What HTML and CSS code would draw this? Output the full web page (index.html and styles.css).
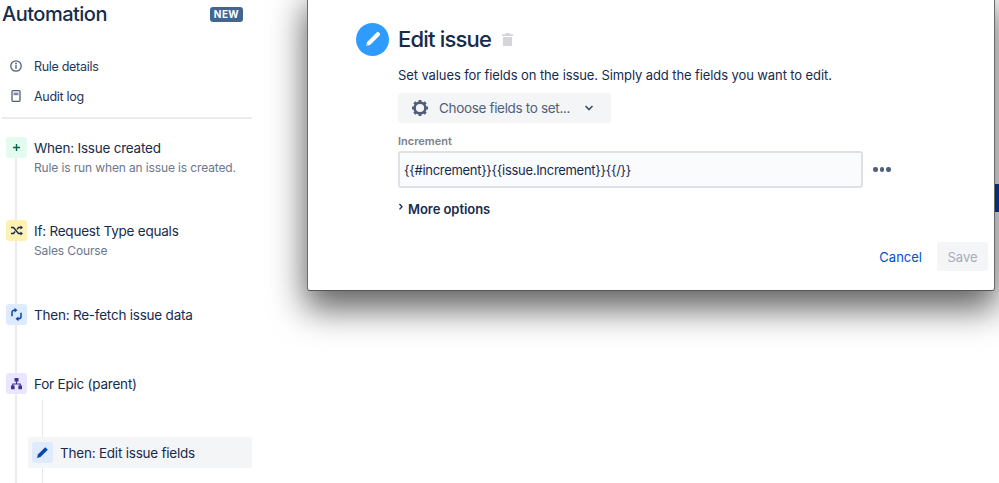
FILE: index.html
```html
<!DOCTYPE html>
<html lang="en">
<head>
<meta charset="utf-8">
<title>Automation</title>
<link rel="stylesheet" href="styles.css">
</head>
<body>
<div class="page">
  <aside class="sidebar">
    <header class="side-head">
      <h1 class="side-title">Automation</h1>
      <span class="badge">NEW</span>
    </header>
    <nav class="side-nav">
      <a class="nav-item">
        <svg class="nav-icon" viewBox="0 0 16 16"><circle cx="8" cy="8" r="5.2" fill="none" stroke="#505f79" stroke-width="1.3"/><rect x="7.3" y="7.2" width="1.4" height="3.6" fill="#505f79"/><circle cx="8" cy="5.5" r=".9" fill="#505f79"/></svg>
        <span>Rule details</span>
      </a>
      <a class="nav-item">
        <svg class="nav-icon" viewBox="0 0 16 16"><rect x="4" y="2.700" width="8" height="10.600" rx="1" fill="none" stroke="#505f79" stroke-width="1.300"/><rect x="5.600" y="4.600" width="4.800" height="2.600" fill="#7a869a"/></svg>
        <span>Audit log</span>
      </a>
    </nav>
    <div class="timeline">
      <div class="step step-when">
        <span class="tile tile-green"><svg viewBox="0 0 21 21"><path d="M10.500 7v7M7 10.500h7" stroke="#006644" stroke-width="1.400"/></svg></span>
        <div class="step-text"><div class="step-name">When: Issue created</div><div class="step-sub">Rule is run when an issue is created.</div></div>
      </div>
      <div class="step step-if">
        <span class="tile tile-yellow"><svg viewBox="0 0 21 21"><path d="M5 7.500h2.500l5 6H15M5 13.500h2.500l1.600-2M11 9.400l1.500-1.900H15" fill="none" stroke="#172b4d" stroke-width="1.400"/><path d="M14.500 5.500l2.500 2-2.500 2zM14.500 11.500l2.500 2-2.500 2z" fill="#172b4d"/></svg></span>
        <div class="step-text"><div class="step-name">If: Request Type equals</div><div class="step-sub">Sales Course</div></div>
      </div>
      <div class="step step-then">
        <span class="tile tile-blue"><svg viewBox="0 0 21 21"><path d="M9.500 6.200H8.200a2.200 2.200 0 0 0-2.200 2.200v3.800M11.500 14.800h1.300a2.200 2.200 0 0 0 2.200-2.200V8.800" fill="none" stroke="#0747a6" stroke-width="1.500"/><path d="M8.500 3.800v4.800l3-2.400zM12.500 17.200v-4.800l-3 2.400z" fill="#0747a6"/></svg></span>
        <div class="step-text"><div class="step-name">Then: Re-fetch issue data</div></div>
      </div>
      <div class="step step-for">
        <span class="tile tile-purple"><svg viewBox="0 0 21 21"><path d="M8.500 5h4v3.600h-4zM5 12.600h3.600v3.600H5zM12.400 12.600H16v3.600h-3.600z" fill="#403294"/><path d="M10.500 8v3H6.800v2M10.500 11h3.700v2" fill="none" stroke="#403294" stroke-width="1.200"/></svg></span>
        <div class="step-text"><div class="step-name">For Epic (parent)</div></div>
      </div>
      <div class="nested">
        <div class="step-active">
          <span class="tile tile-blue"><svg viewBox="0 0 21 21"><path d="M13.200 5.200l2.600 2.600-7.300 7.300-3.400.8.800-3.400z" fill="#0747a6"/></svg></span>
          <div class="step-text"><div class="step-name">Then: Edit issue fields</div></div>
        </div>
      </div>
    </div>
  </aside>
  <div class="stripe"></div>
  <section class="modal">
    <div class="modal-head">
      <span class="modal-icon"><svg viewBox="0 0 33 33"><path d="M20.600 9.400a1.600 1.600 0 0 1 2.300 0l.7.700a1.600 1.600 0 0 1 0 2.300l-9.600 9.600-4 1.100 1.100-4z" fill="#fff"/><circle cx="11.200" cy="21.900" r="1" fill="#8cc8ff"/></svg></span>
      <h2 class="modal-title">Edit issue</h2>
      <svg class="trash" viewBox="0 0 12 14"><path d="M4 0h4l.6 1.400H12v1.800H0V1.400h3.400zM1 4.200h10V13a1 1 0 0 1-1 1H2a1 1 0 0 1-1-1z" fill="#d3d5d9"/></svg>
    </div>
    <div class="modal-body">
      <p class="desc">Set values for fields on the issue. Simply add the fields you want to edit.</p>
      <button class="choose" type="button">
        <svg class="gear" viewBox="0 0 18 18"><circle cx="9" cy="9" r="5.400" fill="none" stroke="#505f79" stroke-width="2.600"/><path d="M9 1v3M9 14v3M1 9h3M14 9h3M3.300 3.300l2.200 2.200M12.500 12.500l2.200 2.200M14.700 3.300l-2.200 2.200M5.500 12.500l-2.200 2.200" stroke="#505f79" stroke-width="2.800"/></svg>
        <span>Choose fields to set...</span>
        <svg class="chev" viewBox="0 0 10 6"><path d="M1.500 1l3.500 3.500L8.500 1" fill="none" stroke="#42526e" stroke-width="1.700"/></svg>
      </button>
      <label class="field-label">Increment</label>
      <div class="field-row">
        <div class="input">{{#increment}}{{issue.Increment}}{{/}}</div>
        <div class="dots"><i></i><i></i><i></i></div>
      </div>
      <div class="more">
        <svg class="more-chev" viewBox="0 0 6 8"><path d="M1.500 1l2.500 2.700L1.500 6.400" fill="none" stroke="#172b4d" stroke-width="1.300"/></svg>
        <span>More options</span>
      </div>
    </div>
    <footer class="modal-foot">
      <a class="cancel">Cancel</a>
      <button class="save" type="button">Save</button>
    </footer>
  </section>
</div>
</body>
</html>
```
FILE: styles.css
```css
* { box-sizing: border-box; }
html, body { margin: 0; height: 100%; }
body {
  background: #fff;
  color: #172b4d;
  font-family: Inter, "Noto Sans", "Liberation Sans", sans-serif;
  overflow: hidden;
}
.page { position: relative; width: 999px; height: 483px; overflow: hidden; }

.sidebar { width: 250px; margin-left: 2px; }
.side-head { display: flex; align-items: center; justify-content: space-between; height: 29px; padding-right: 9px; }
.side-title { margin: 0; font-size: 20px; font-weight: 500; line-height: 29px; color: #172b4d; letter-spacing: -.5px; }
.badge {
  background: #42668f; color: #fff; font-size: 10px; font-weight: 700; letter-spacing: .4px;
  line-height: 14px; height: 15px; width: 33px; text-align: center; border-radius: 3px;
}
.side-nav { margin-top: 22px; padding-bottom: 6px; border-bottom: 2px solid #ebecf0; }
.nav-item { display: flex; align-items: center; height: 30px; font-size: 12.500px; letter-spacing: -.3px; color: #253858; }
.nav-icon { width: 16px; height: 16px; margin: 0 10px 0 6px; flex: none; }

.timeline { position: relative; margin: 18px 0 0 4px; }
.timeline::before {
  content: ""; position: absolute; left: 9px; top: 21px; bottom: -40px; width: 2px; background: #ebecf0;
}
.step { display: flex; gap: 7px; position: relative; }
.step-when { margin-top: 0; }
.step-if { margin-top: 44px; }
.step-then { margin-top: 45px; }
.step-for { margin-top: 47px; }
.tile { width: 21px; height: 21px; border-radius: 3px; flex: none; position: relative; }
.tile svg { display: block; width: 21px; height: 21px; }
.tile-green { background: #e3fcef; }
.tile-yellow { background: #fff0b3; }
.tile-blue { background: #deebff; }
.tile-purple { background: #eae6ff; }
.step-text { padding-top: 1px; }
.step-name { font-size: 13.500px; line-height: 21px; letter-spacing: -.22px; color: #172b4d; white-space: nowrap; }
.step-sub { font-size: 12px; line-height: 16px; letter-spacing: -.13px; margin-top: 1px; color: #6b778c; white-space: nowrap; }

.nested { position: relative; margin: 0 0 0 22px; padding-top: 42px; }
.nested::before {
  content: ""; position: absolute; left: 14px; top: 5px; height: 90px; width: 1px; background: #e6e7eb;
}
.step-active {
  position: relative; display: flex; align-items: center; gap: 7px; height: 31px; width: 224px;
  padding-left: 4px; background: #f4f5f7; border-radius: 3px;
}

.stripe { position: absolute; left: 990px; top: 184px; width: 9px; height: 28px; background: #0747a6; }

.modal {
  position: absolute; left: 307px; top: -10px; width: 688px; height: 301px;
  background: #fff; border: 1px solid #6b6b6b; border-bottom-color: #555; border-radius: 3px;
  box-shadow: 0 16px 34px 2px rgba(0, 0, 0, .62);
  display: flex; flex-direction: column;
}
.modal-head { display: flex; align-items: center; margin: 31px 0 0 48px; height: 34px; }
.modal-icon { width: 33px; height: 33px; border-radius: 50%; background: #2e9bff; flex: none; }
.modal-icon svg { display: block; width: 33px; height: 33px; }
.modal-title { margin: 0 0 0 9px; font-size: 22px; font-weight: 500; color: #172b4d; letter-spacing: -.8px; }
.trash { width: 11px; height: 13px; margin: 1px 0 0 11px; }
.modal-body { margin: 0 0 0 90px; }
.desc { margin: 10px 0 0; font-size: 13px; line-height: 18px; letter-spacing: -.1px; color: #172b4d; white-space: nowrap; }
.choose {
  display: flex; align-items: center; width: 213px; height: 30px; margin-top: 9px; padding: 0 0 0 13px;
  background: #f4f5f7; border: 0; border-radius: 3px; color: #505f79; font: inherit; font-size: 13.500px; letter-spacing: -.33px;
}
.gear { width: 18px; height: 18px; flex: none; margin-right: 10px; }
.chev { width: 10px; height: 6px; margin-left: 14px; flex: none; }
.field-label { display: block; margin-top: 11px; font-size: 11px; line-height: 14px; font-weight: 600; color: #7a7f88; }
.field-row { display: flex; align-items: center; margin-top: 3px; }
.input {
  width: 465px; height: 37px; padding: 0 4px; background: #fafbfc; border: 2px solid #dfe1e6; border-radius: 3px;
  font-size: 13px; line-height: 34px; letter-spacing: -.3px; color: #172b4d; white-space: nowrap;
}
.dots { display: flex; gap: 2px; margin-left: 10px; }
.dots i { width: 4.500px; height: 4.500px; border-radius: 50%; background: #505f79; }
.more { display: flex; align-items: center; margin-top: 11px; height: 20px; font-size: 13px; font-weight: 600; letter-spacing: -.05px; color: #172b4d; }
.more-chev { width: 6px; height: 8px; margin-right: 4px; position: relative; top: -2px; }
.modal-foot { display: flex; align-items: center; justify-content: flex-end; gap: 15px; margin-top: 23px; padding-right: 6px; }
.cancel { font-size: 13px; color: #0052cc; }
.save {
  width: 51px; height: 29px; background: #f4f5f7; border: 0; border-radius: 3px;
  color: #a5adba; font: inherit; font-size: 13px;
}
```
